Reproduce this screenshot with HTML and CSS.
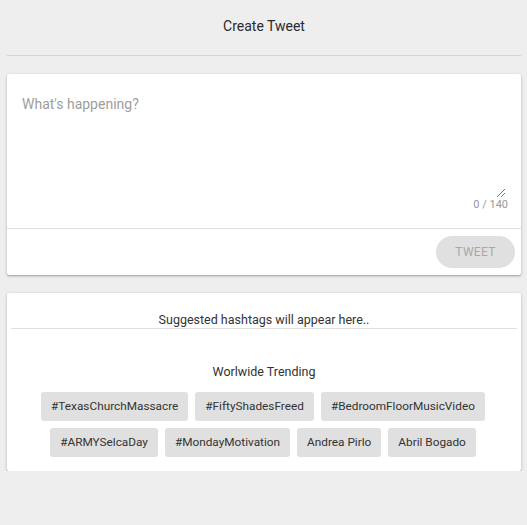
FILE: index.html
```html
<!DOCTYPE html>
<html>
<head>
<meta charset="utf-8">
<link rel="stylesheet" href="styles.css">
</head>
<body>
<div class="page">
  <header class="title">Create Tweet</header>
  <div class="rule"></div>
  <section class="card compose">
    <div class="field">
      <textarea class="input" placeholder="What's happening?"></textarea>
      <div class="counter">0 / 140</div>
    </div>
    <div class="actions">
      <button class="tweet" disabled>TWEET</button>
    </div>
  </section>
  <section class="card tags">
    <div class="suggest">Suggested hashtags will appear here..</div>
    <div class="trend-title">Worlwide Trending</div>
    <div class="chips">
      <span class="chip">#TexasChurchMassacre</span>
      <span class="chip">#FiftyShadesFreed</span>
      <span class="chip">#BedroomFloorMusicVideo</span>
      <span class="chip">#ARMYSelcaDay</span>
      <span class="chip">#MondayMotivation</span>
      <span class="chip">Andrea Pirlo</span>
      <span class="chip">Abril Bogado</span>
    </div>
  </section>
</div>
</body>
</html>
```

FILE: styles.css
```css
html, body {
  margin: 0;
  padding: 0;
  background: #eeeeee;
  font-family: Roboto, "Noto Sans", sans-serif;
}
.page {
  padding: 0 6px 0 7px;
}
.title {
  height: 55px;
  line-height: 52px;
  text-align: center;
  font-size: 14px;
  color: #2a2a2a;
}
.rule {
  height: 1px;
  background: #d4d4d4;
}
.card {
  background: #fff;
  border-radius: 2px;
  box-shadow: 0 1px 3px rgba(0,0,0,0.25), 0 1px 1px rgba(0,0,0,0.12);
}
.compose {
  margin-top: 18px;
}
.field {
  position: relative;
  height: 154px;
  border-bottom: 1px solid #e0e0e0;
}
.input {
  display: block;
  box-sizing: border-box;
  width: 100%;
  height: 100%;
  border: none;
  outline: none;
  resize: none;
  padding: 22px 15px 0;
  font-family: Roboto, "Noto Sans", sans-serif;
  font-size: 14px;
  background: transparent;
}
.input::placeholder {
  color: #9e9e9e;
}
.field::after {
  content: "";
  position: absolute;
  right: 16px;
  top: 115px;
  width: 8px;
  height: 8px;
  background: linear-gradient(135deg, transparent 45%, #777 45%, #777 52%, transparent 52%, transparent 70%, #777 70%, #777 78%, transparent 78%);
}
.counter {
  position: absolute;
  right: 13px;
  top: 124px;
  font-size: 11px;
  color: #999;
}
.actions {
  display: flex;
  justify-content: flex-end;
  padding: 7px 6px 7px 0;
}
.tweet {
  width: 79px;
  height: 32px;
  border: none;
  border-radius: 16px;
  background: #e0e0e0;
  color: #a8a8a8;
  font-family: Roboto, "Noto Sans", sans-serif;
  font-size: 12px;
  letter-spacing: 0.3px;
}
.tags {
  margin-top: 18px;
  padding: 0 4px 14px;
}
.suggest {
  text-align: center;
  font-size: 12.5px;
  color: #333;
  padding-top: 19px;
  padding-bottom: 1px;
  border-bottom: 1px solid #e0e0e0;
}
.trend-title {
  text-align: center;
  font-size: 12.5px;
  color: #333;
  margin-top: 35px;
}
.chips {
  display: flex;
  flex-wrap: wrap;
  justify-content: center;
  gap: 7px 7px;
  padding: 13px 28px 0 26px;
}
.chip {
  display: inline-block;
  height: 29px;
  line-height: 29px;
  padding: 0 10px;
  border-radius: 3px;
  background: #e0e0e0;
  color: #333;
  font-size: 11.8px;
}
```
